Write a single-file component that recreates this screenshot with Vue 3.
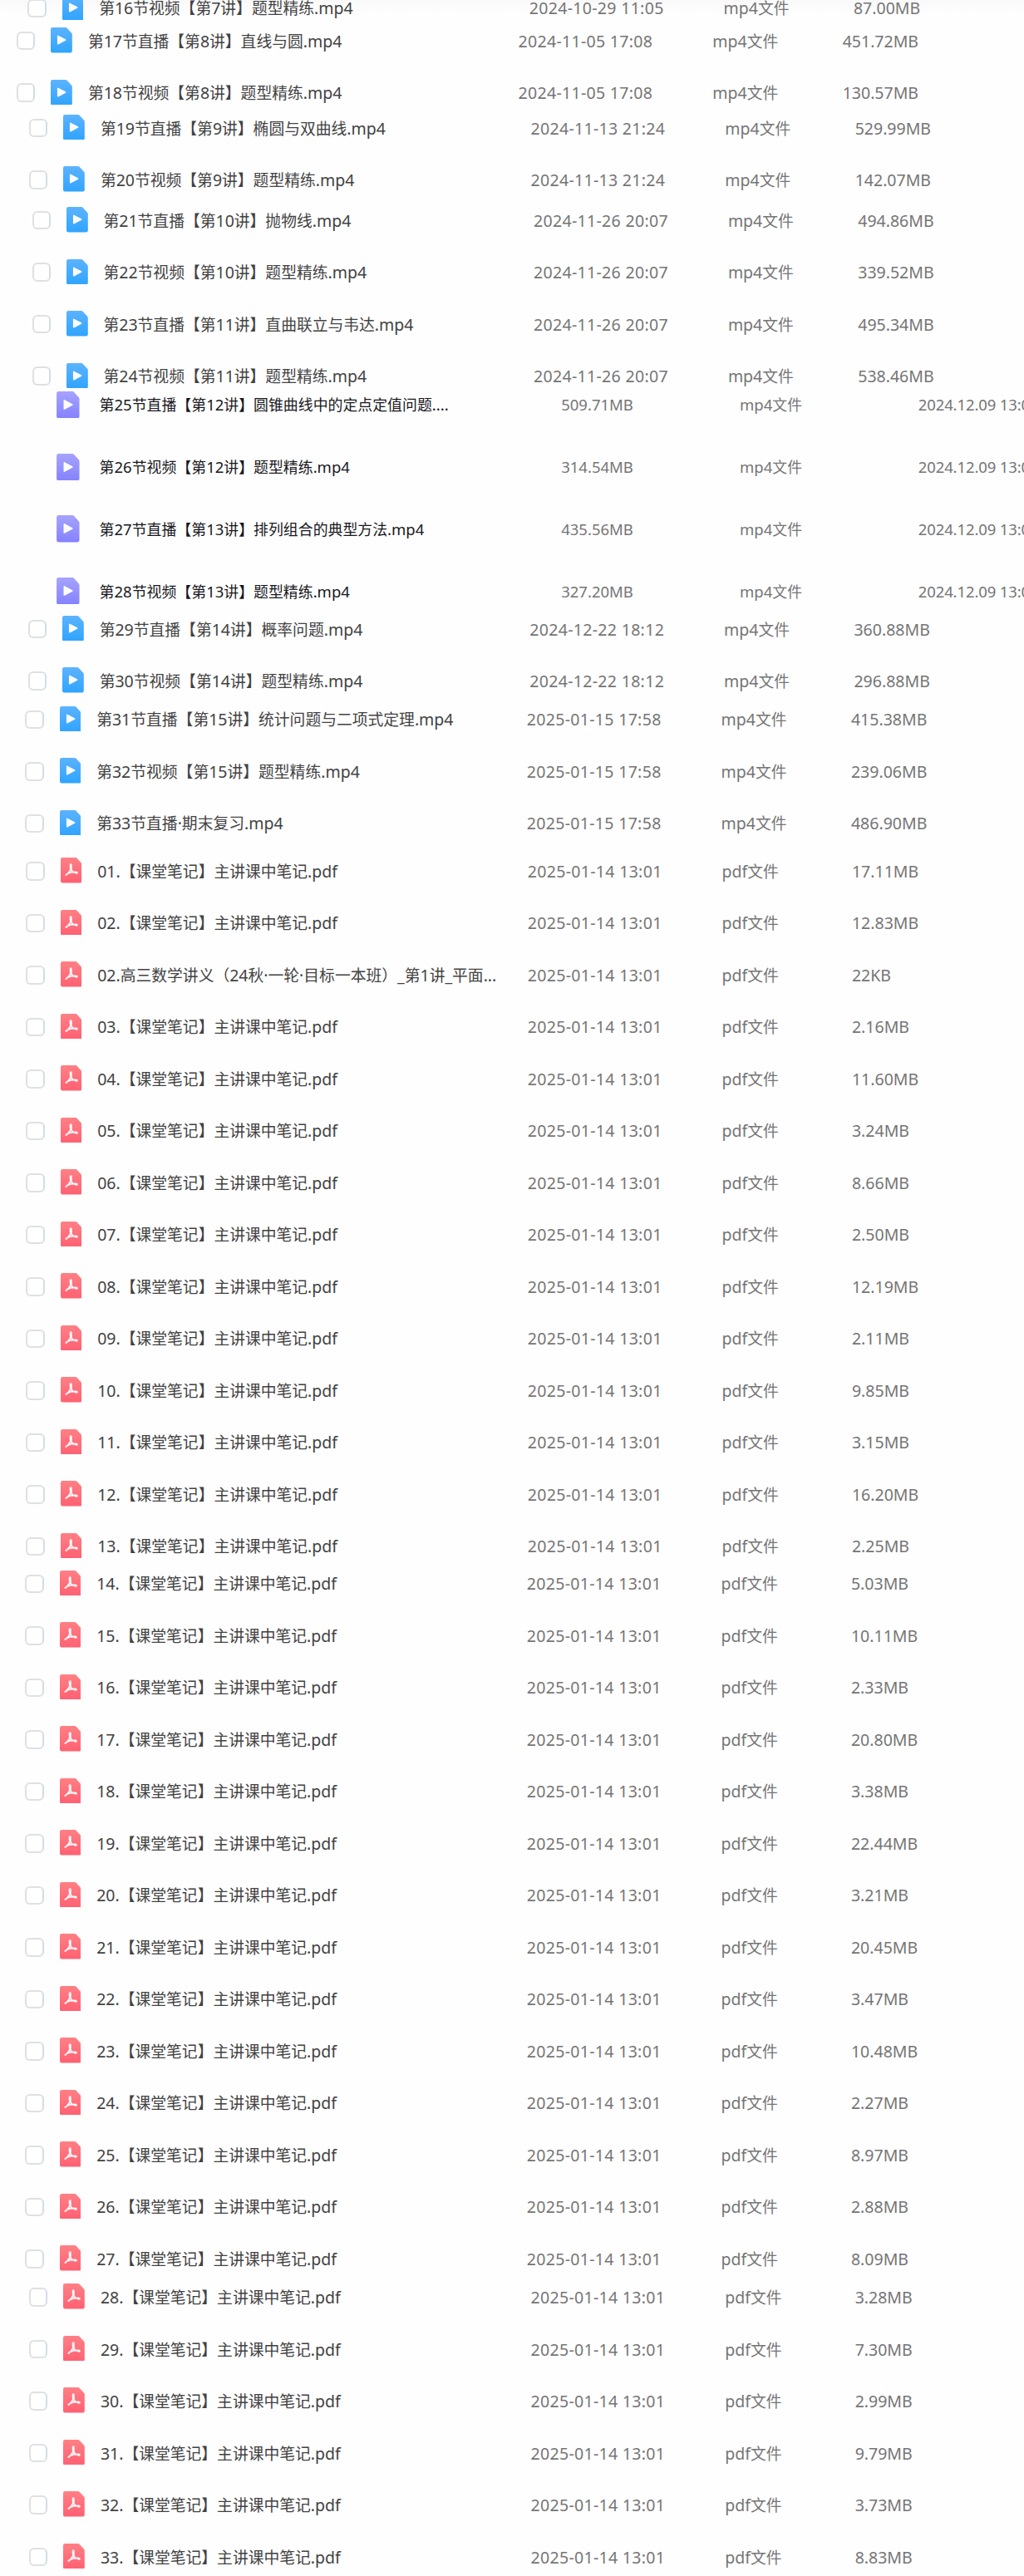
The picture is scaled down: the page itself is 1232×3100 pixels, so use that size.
<script setup>
const pdfSizes1 = ['17.11MB', '12.83MB', '22KB', '2.16MB', '11.60MB', '3.24MB', '8.66MB', '2.50MB', '12.19MB', '2.11MB', '9.85MB', '3.15MB', '16.20MB', '2.25MB']
const pdfSizes2 = ['5.03MB', '10.11MB', '2.33MB', '20.80MB', '3.38MB', '22.44MB', '3.21MB', '20.45MB', '3.47MB', '10.48MB', '2.27MB', '8.97MB', '2.88MB', '8.09MB']
const pdfSizes3 = ['3.28MB', '7.30MB', '2.99MB', '9.79MB', '3.73MB', '8.83MB']

const note = (n) => `${String(n).padStart(2, '0')}.【课堂笔记】主讲课中笔记.pdf`
const notes = (from, sizes) => sizes.map((size, i) => [note(from + i), size])

const firstNotes = [
  [note(1), pdfSizes1[0]],
  [note(2), pdfSizes1[1]],
  ['02.高三数学讲义（24秋·一轮·目标一本班）_第1讲_平面...', pdfSizes1[2]],
  ...notes(3, pdfSizes1.slice(3)),
]

// x: left edge of the file icon, height: panel height, first: centre of the first row inside the panel
const groups = [
  { kind: 'video', x: 74.6, height: 29, first: 9, date: '2024-10-29 11:05', files: [['第16节视频【第7讲】题型精练.mp4', '87.00MB']] },
  { kind: 'video', x: 61.3, height: 103, first: 19.3, date: '2024-11-05 17:08', files: [['第17节直播【第8讲】直线与圆.mp4', '451.72MB'], ['第18节视频【第8讲】题型精练.mp4', '130.57MB']] },
  { kind: 'video', x: 76.3, height: 105, first: 21.2, date: '2024-11-13 21:24', files: [['第19节直播【第9讲】椭圆与双曲线.mp4', '529.99MB'], ['第20节视频【第9讲】题型精练.mp4', '142.07MB']] },
  { kind: 'video', x: 79.9, height: 232, first: 27.3, date: '2024-11-26 20:07', files: [['第21节直播【第10讲】抛物线.mp4', '494.86MB'], ['第22节视频【第10讲】题型精练.mp4', '339.52MB'], ['第23节直播【第11讲】直曲联立与韦达.mp4', '495.34MB'], ['第24节视频【第11讲】题型精练.mp4', '538.46MB']] },
  { kind: 'clip', x: 68.4, height: 266, first: 17.9, date: '2024.12.09 13:01', files: [['第25节直播【第12讲】圆锥曲线中的定点定值问题....', '509.71MB'], ['第26节视频【第12讲】题型精练.mp4', '314.54MB'], ['第27节直播【第13讲】排列组合的典型方法.mp4', '435.56MB'], ['第28节视频【第13讲】题型精练.mp4', '327.20MB']] },
  { kind: 'video', x: 75.1, height: 108, first: 21.2, date: '2024-12-22 18:12', files: [['第29节直播【第14讲】概率问题.mp4', '360.88MB'], ['第30节视频【第14讲】题型精练.mp4', '296.88MB']] },
  { kind: 'video', x: 71.6, height: 173, first: 22.1, date: '2025-01-15 17:58', files: [['第31节直播【第15讲】统计问题与二项式定理.mp4', '415.38MB'], ['第32节视频【第15讲】题型精练.mp4', '239.06MB'], ['第33节直播·期末复习.mp4', '486.90MB']] },
  { kind: 'pdf', x: 72.6, height: 867, first: 31.7, date: '2025-01-14 13:01', files: firstNotes },
  { kind: 'pdf', x: 71.6, height: 857, first: 22.1, date: '2025-01-14 13:01', files: notes(14, pdfSizes2) },
  { kind: 'pdf', x: 76.3, height: 360, first: 23.7, date: '2025-01-14 13:01', files: notes(28, pdfSizes3) },
]

const ext = { video: 'mp4', clip: 'mp4', pdf: 'pdf' }
const rowHeight = (g) => (g.kind === 'clip' ? 74.8 : 62.5)
const rowOffset = (g) => ({ paddingLeft: `${g.x}px`, marginTop: `${g.first - rowHeight(g) / 2}px` })

// Split a file name into Latin and CJK runs, which use different sizes
const runs = (text) => text.match(/[\x20-\x7e·]+|[^\x20-\x7e·]+/g).map((t) => ({ t, latin: /^[\x20-\x7e·]/.test(t) }))
</script>

<template>
  <main class="page">
    <svg class="defs" width="0" height="0" aria-hidden="true">
      <linearGradient id="g-video" x1="0" y1="0" x2="0" y2="1"><stop offset="0" stop-color="#5cb3ff" /><stop offset="1" stop-color="#30a4ff" /></linearGradient>
      <linearGradient id="g-clip" x1="0" y1="0" x2="0" y2="1"><stop offset="0" stop-color="#a6a3ff" /><stop offset="1" stop-color="#8582ff" /></linearGradient>
      <linearGradient id="g-pdf" x1="0" y1="0" x2="0" y2="1"><stop offset="0" stop-color="#ff8085" /><stop offset="1" stop-color="#ff6173" /></linearGradient>
    </svg>
    <section v-for="(g, gi) in groups" :key="gi" class="group" :class="g.kind" :style="{ height: g.height + 'px' }">
      <div class="rows" :style="rowOffset(g)">
        <div v-for="f in g.files" :key="f[0]" class="row">
          <span v-if="g.kind !== 'clip'" class="check"></span>
          <svg class="icon" viewBox="0 0 25.4 30" aria-hidden="true">
            <path d="M2.2 0H17.6Q18.6 0 19.3 .8L24.7 6.6Q25.4 7.4 25.4 8.4V27.8A2.2 2.2 0 0 1 23.2 30H2.2A2.2 2.2 0 0 1 0 27.8V2.2A2.2 2.2 0 0 1 2.2 0Z" :fill="`url(#g-${g.kind})`" />
            <g v-if="g.kind === 'pdf'" fill="none" stroke="#fff" stroke-opacity=".88" stroke-linecap="round" stroke-linejoin="round">
              <path d="M12 8.6C12.1 9.6 12 10.6 12 11.6" stroke-width="3" />
              <path d="M12 10C12 13.4 12.6 15.6 14.8 17.2" stroke-width="2" />
              <path d="M12.2 12.4C11.4 16 9.2 18.6 6.4 20.6" stroke-width="2.1" />
              <path d="M9.8 18.2C12.4 17.1 15.6 16.9 19 17.8" stroke-width="2" />
              <path d="M17.8 17.7L19 17.9" stroke-width="2.8" />
            </g>
            <path v-else d="M8.6 10.2V19.4L17.3 14.8Z" fill="#fff" fill-opacity=".96" stroke="#fff" stroke-width="1.6" stroke-linejoin="round" />
          </svg>
          <span class="name"><span v-for="(r, i) in runs(f[0])" :key="i" :class="{ latin: r.latin }">{{ r.t }}</span></span>
          <span v-if="g.kind !== 'clip'" class="date latin">{{ g.date }}</span>
          <span v-else class="size latin">{{ f[1] }}</span>
          <span class="type"><span class="latin">{{ ext[g.kind] }}</span>文件</span>
          <span v-if="g.kind !== 'clip'" class="size latin">{{ f[1] }}</span>
          <span v-else class="date latin">{{ g.date }}</span>
        </div>
      </div>
    </section>
  </main>
</template>

<style>
body {
  margin: 0;
  background: #fefefe;
}
</style>

<style scoped>
.page {
  width: 1232px;
  height: 3100px;
  overflow: hidden;
  background: linear-gradient(#f9f9f9, #fefefe 16px);
  font-family: "Noto Sans", "Noto Sans CJK SC", sans-serif;
  color: #757575;
}
.defs {
  display: block;
}
.group {
  display: flex;
  align-items: flex-start;
  overflow: hidden;
  --cjk: 18.8px;
  --latin: 19.5px;
  font-size: var(--cjk);
}
.rows {
  flex: none;
}
.row {
  display: grid;
  grid-template-columns: 44.6px 517.6px 233.8px 156.4px 140px;
  align-items: center;
  height: 62.5px;
  line-height: 30px;
  white-space: nowrap;
}
.row > * {
  grid-row: 1;
}
.check {
  grid-column: 1;
  box-sizing: border-box;
  width: 22.4px;
  height: 22.4px;
  margin: 1.4px 0 0 -41.4px;
  border: 2px solid #dfe0e1;
  border-right-color: #d3dde5;
  border-radius: 6px;
  background: #fff;
}
.icon {
  grid-column: 1;
  width: 25.8px;
  height: 30.5px;
}
.name {
  grid-column: 2;
  color: #424242;
}
.name,
.date,
.type,
.size {
  display: block;
  height: 30px;
  margin-top: 2.6px;
}
.date {
  letter-spacing: 0.32px;
}
.latin {
  font-size: var(--latin);
}
.clip {
  --cjk: 17.9px;
  --latin: 18.5px;
}
.clip .row {
  grid-template-columns: 51.2px 555.6px 214.8px 214.8px 140px;
  height: 74.8px;
}
.clip .icon {
  width: 27.6px;
  height: 32.4px;
}
.clip .name,
.clip .date,
.clip .type,
.clip .size {
  margin-top: 1px;
}
.clip .name {
  color: #181820;
}
.clip .date {
  letter-spacing: -0.12px;
}
</style>
